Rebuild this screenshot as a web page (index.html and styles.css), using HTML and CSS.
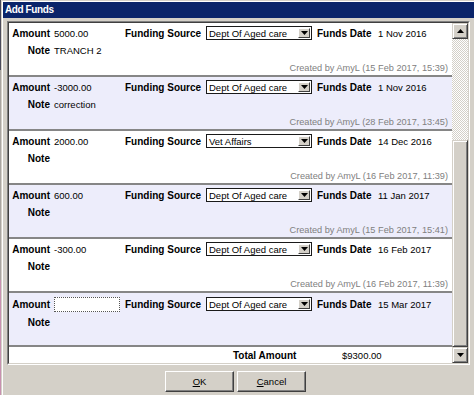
FILE: index.html
```html
<!DOCTYPE html>
<html lang="en">
<head>
  <meta charset="UTF-8">
  <title>Add Funds</title>
  <link rel="stylesheet" href="styles.css">
</head>
<body>
  <div class="desk">
    <div class="edge"></div>
    <div class="window">
      <div class="titlebar">Add Funds</div>
      <div class="dialog">
        <div class="panel">
          <div class="panel-inner">
            <div class="list">
              <div class="entry">
                <div class="line1">
                  <span class="lbl">Amount</span><span>5000.00</span>
                  <span class="lbl-l">Funding Source</span>
                  <div class="select"><span>Dept Of Aged care</span><i class="drop"><svg width="7" height="4"><polygon points="0,0 7,0 3.5,4"/></svg></i></div>
                  <span class="lbl-l date-lbl">Funds Date</span><span>1 Nov 2016</span>
                </div>
                <div class="line2"><span class="lbl">Note</span><span>TRANCH 2</span></div>
                <div class="created">Created by AmyL (15 Feb 2017, 15:39)</div>
              </div>
              <div class="entry alt">
                <div class="line1">
                  <span class="lbl">Amount</span><span>-3000.00</span>
                  <span class="lbl-l">Funding Source</span>
                  <div class="select"><span>Dept Of Aged care</span><i class="drop"><svg width="7" height="4"><polygon points="0,0 7,0 3.5,4"/></svg></i></div>
                  <span class="lbl-l date-lbl">Funds Date</span><span>1 Nov 2016</span>
                </div>
                <div class="line2"><span class="lbl">Note</span><span>correction</span></div>
                <div class="created">Created by AmyL (28 Feb 2017, 13:45)</div>
              </div>
              <div class="entry">
                <div class="line1">
                  <span class="lbl">Amount</span><span>2000.00</span>
                  <span class="lbl-l">Funding Source</span>
                  <div class="select"><span>Vet Affairs</span><i class="drop"><svg width="7" height="4"><polygon points="0,0 7,0 3.5,4"/></svg></i></div>
                  <span class="lbl-l date-lbl">Funds Date</span><span>14 Dec 2016</span>
                </div>
                <div class="line2"><span class="lbl">Note</span><span></span></div>
                <div class="created">Created by AmyL (16 Feb 2017, 11:39)</div>
              </div>
              <div class="entry alt">
                <div class="line1">
                  <span class="lbl">Amount</span><span>600.00</span>
                  <span class="lbl-l">Funding Source</span>
                  <div class="select"><span>Dept Of Aged care</span><i class="drop"><svg width="7" height="4"><polygon points="0,0 7,0 3.5,4"/></svg></i></div>
                  <span class="lbl-l date-lbl">Funds Date</span><span>11 Jan 2017</span>
                </div>
                <div class="line2"><span class="lbl">Note</span><span></span></div>
                <div class="created">Created by AmyL (15 Feb 2017, 15:41)</div>
              </div>
              <div class="entry">
                <div class="line1">
                  <span class="lbl">Amount</span><span>-300.00</span>
                  <span class="lbl-l">Funding Source</span>
                  <div class="select"><span>Dept Of Aged care</span><i class="drop"><svg width="7" height="4"><polygon points="0,0 7,0 3.5,4"/></svg></i></div>
                  <span class="lbl-l date-lbl">Funds Date</span><span>16 Feb 2017</span>
                </div>
                <div class="line2"><span class="lbl">Note</span><span></span></div>
                <div class="created">Created by AmyL (16 Feb 2017, 11:39)</div>
              </div>
              <div class="entry alt new">
                <div class="line1">
                  <span class="lbl">Amount</span><span><input class="amount-input" type="text"></span>
                  <span class="lbl-l">Funding Source</span>
                  <div class="select"><span>Dept Of Aged care</span><i class="drop"><svg width="7" height="4"><polygon points="0,0 7,0 3.5,4"/></svg></i></div>
                  <span class="lbl-l date-lbl">Funds Date</span><span>15 Mar 2017</span>
                </div>
                <div class="line2"><span class="lbl">Note</span><span></span></div>
              </div>
              <div class="total">
                <span></span><span class="lbl-l">Total Amount</span><span>$9300.00</span>
              </div>
            </div>
            <div class="scrollbar">
              <div class="sb-btn"><svg width="7" height="4"><polygon points="3.5,0 7,4 0,4"/></svg></div>
              <div class="sb-track"></div>
              <div class="sb-thumb"></div>
              <div class="sb-btn"><svg width="7" height="4"><polygon points="0,0 7,0 3.5,4"/></svg></div>
            </div>
          </div>
        </div>
        <div class="buttons">
          <button><u>O</u>K</button>
          <button><u>C</u>ancel</button>
        </div>
      </div>
    </div>
  </div>
</body>
</html>
```

FILE: styles.css
```css
* {
  box-sizing: border-box;
}
body {
  margin: 0;
  background: #fff;
  font-family: "Liberation Sans", Arial, sans-serif;
  font-size: 9.5px;
  color: #000;
}
.desk {
  display: flex;
  width: 474px;
  height: 402px;
  overflow: hidden;
}
.edge {
  flex: none;
  width: 1px;
  height: 395px;
  background: linear-gradient(#4a4a5a 0 70px, #a8a4a0 70px 280px, #c890b0 280px);
}
.window {
  flex: none;
  width: 480px;
  height: 395px;
  background: #d4d0c8;
  border-top: 1px solid #d4d0c8;
  border-left: 1px solid #d4d0c8;
  padding: 1px 0 0 1px;
  box-shadow: inset 1px 1px #fff;
}
.titlebar {
  height: 16px;
  line-height: 16px;
  padding-left: 2px;
  background: #0a246a;
  color: #fff;
  font-weight: bold;
  font-size: 10px;
  letter-spacing: -0.4px;
}
.dialog {
  padding: 3px 0 0 4px;
}
.panel {
  width: 463px;
  border: 1px solid;
  border-color: #808080 #fff #fff #808080;
}
.panel-inner {
  display: flex;
  border: 1px solid;
  border-color: #404040 #d4d0c8 #d4d0c8 #404040;
}
.list {
  width: 443px;
  background: #fff;
}
.entry {
  height: 54px;
  padding-top: 3px;
  background: #fff;
  border-bottom: 2px solid #868686;
}
.entry.alt {
  background: #ededfb;
}
.line1 {
  display: grid;
  grid-template-columns: 45px 71px 81px 106px 66px 1fr;
  align-items: center;
  height: 14px;
}
.line2 {
  display: grid;
  grid-template-columns: 45px 1fr;
  align-items: center;
  height: 14px;
  margin-top: 3px;
}
.lbl {
  font-weight: bold;
  font-size: 10px;
  text-align: right;
  padding-right: 4px;
}
.lbl-l {
  font-weight: bold;
  font-size: 10px;
}
.date-lbl {
  padding-left: 5px;
}
.created {
  height: 14px;
  margin-top: 4px;
  line-height: 14px;
  text-align: right;
  padding-right: 4px;
  color: #808080;
  font-size: 9.2px;
}
.select {
  display: flex;
  align-items: center;
  justify-content: space-between;
  height: 14px;
  padding: 1px 1px 1px 2px;
  background: #fff;
  border: 1px solid #1a1a1a;
}
.drop {
  display: flex;
  align-items: center;
  justify-content: center;
  width: 12px;
  height: 10px;
  background: #d4d0c8;
  border: 1px solid;
  border-color: #fff #404040 #404040 #fff;
}
.entry.new .line1 {
  height: 16px;
}
.amount-input {
  display: block;
  width: 66px;
  height: 15px;
  margin: 0;
  padding: 0;
  background: #fff;
  border: 1px dotted #555;
  outline: none;
}
.total {
  display: grid;
  grid-template-columns: 224px 109px 1fr;
  align-items: center;
  height: 16px;
  background: #fff;
}
.scrollbar {
  display: flex;
  flex-direction: column;
  width: 16px;
}
.sb-btn,
.sb-thumb {
  background: #d4d0c8;
  border: 1px solid;
  border-color: #d4d0c8 #404040 #404040 #d4d0c8;
  box-shadow: inset 1px 1px #fff, inset -1px -1px #808080;
}
.sb-btn {
  display: flex;
  align-items: center;
  justify-content: center;
  height: 16px;
}
.sb-track {
  height: 101px;
  background: repeating-conic-gradient(#d4d0c8 0 25%, #fff 0 50%) 0 0 / 2px 2px;
}
.sb-thumb {
  height: 207px;
}
.buttons {
  display: flex;
  gap: 3px;
  margin: 6px 0 0 158px;
}
button {
  width: 69px;
  height: 21px;
  padding: 0;
  font-family: "Liberation Sans", Arial, sans-serif;
  font-size: 9.5px;
  color: #000;
  background: #d4d0c8;
  border: 1px solid;
  border-color: #fff #404040 #404040 #fff;
  box-shadow: inset -1px -1px #808080;
}
```
